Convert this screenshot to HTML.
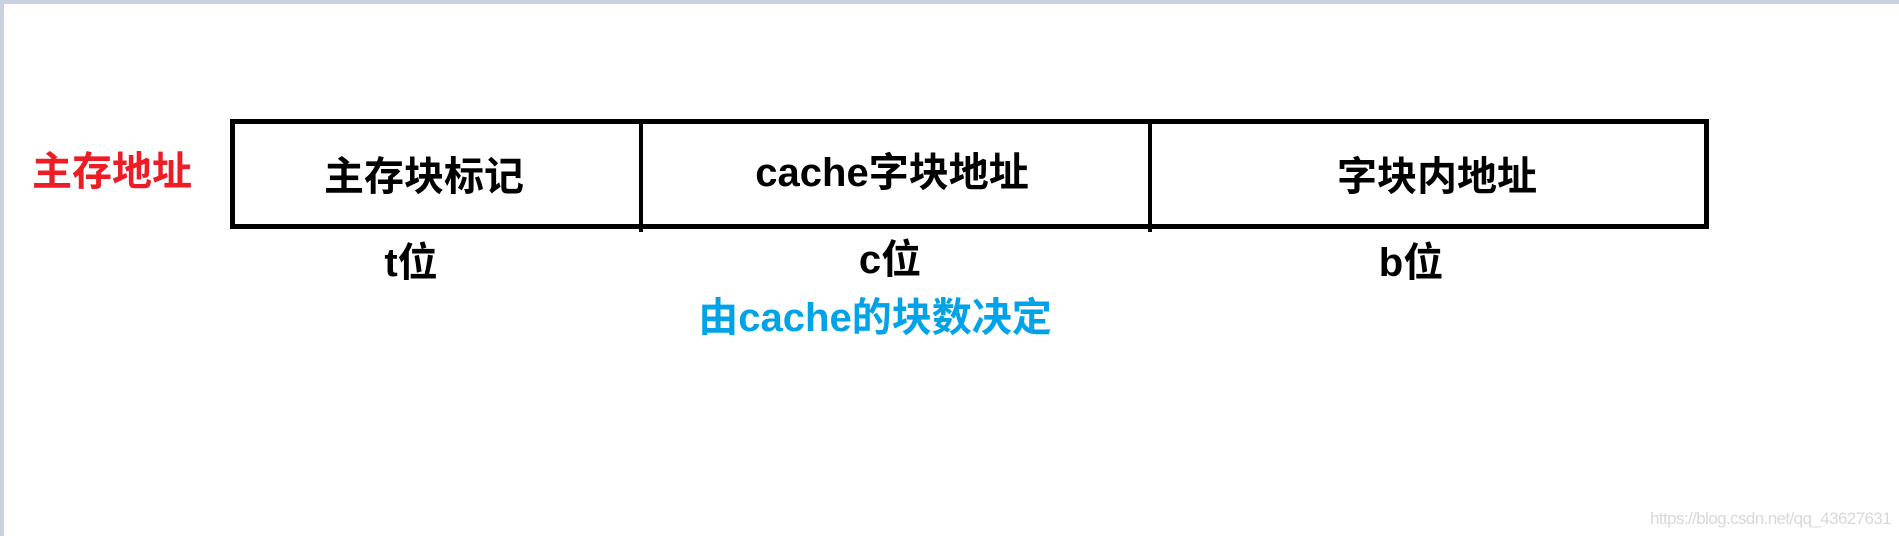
<!DOCTYPE html>
<html><head><meta charset="utf-8"><style>
html,body{margin:0;padding:0}
body{width:1899px;height:536px;position:relative;background:#fff;overflow:hidden;font-family:"Liberation Sans","Noto Sans CJK SC",sans-serif;font-weight:bold}
.t{position:absolute;white-space:nowrap;line-height:1;font-size:40px;transform:translate(-50%,-50%)}
.c{font-weight:600}
.ln{position:absolute;background:#000}
</style></head><body>
<div style="position:absolute;left:0;top:0;width:1899px;height:4px;background:#c9d1e1"></div>
<div style="position:absolute;left:0;top:0;width:4px;height:536px;background:#c9d1e1"></div>
<div style="position:absolute;left:230px;top:119px;width:1479px;height:110px;box-sizing:border-box;border:5px solid #000"></div>
<div class="ln" style="left:639px;top:119px;width:4px;height:113px"></div>
<div class="ln" style="left:1148px;top:119px;width:4px;height:113px"></div>
<div class="t c" style="left:112px;top:172px;color:#ee1c25">主存地址</div>
<div class="t c" style="left:424px;top:177px">主存块标记</div>
<div class="t" style="left:892px;top:173px">cache<span class="c">字块地址</span></div>
<div class="t c" style="left:1437px;top:177px">字块内地址</div>
<div class="t" style="left:411px;top:263px">t<span class="c">位</span></div>
<div class="t" style="left:890px;top:260px">c<span class="c">位</span></div>
<div class="t" style="left:1411px;top:263px">b<span class="c">位</span></div>
<div class="t" style="left:875px;top:318px;color:#00a2e8"><span class="c">由</span>cache<span class="c">的块数决定</span></div>
<div style="position:absolute;left:1650px;top:509px;font-size:17px;font-weight:normal;color:#d8d8d8;letter-spacing:-0.6px;white-space:nowrap">https://blog.csdn.net/qq_43627631</div>
</body></html>
